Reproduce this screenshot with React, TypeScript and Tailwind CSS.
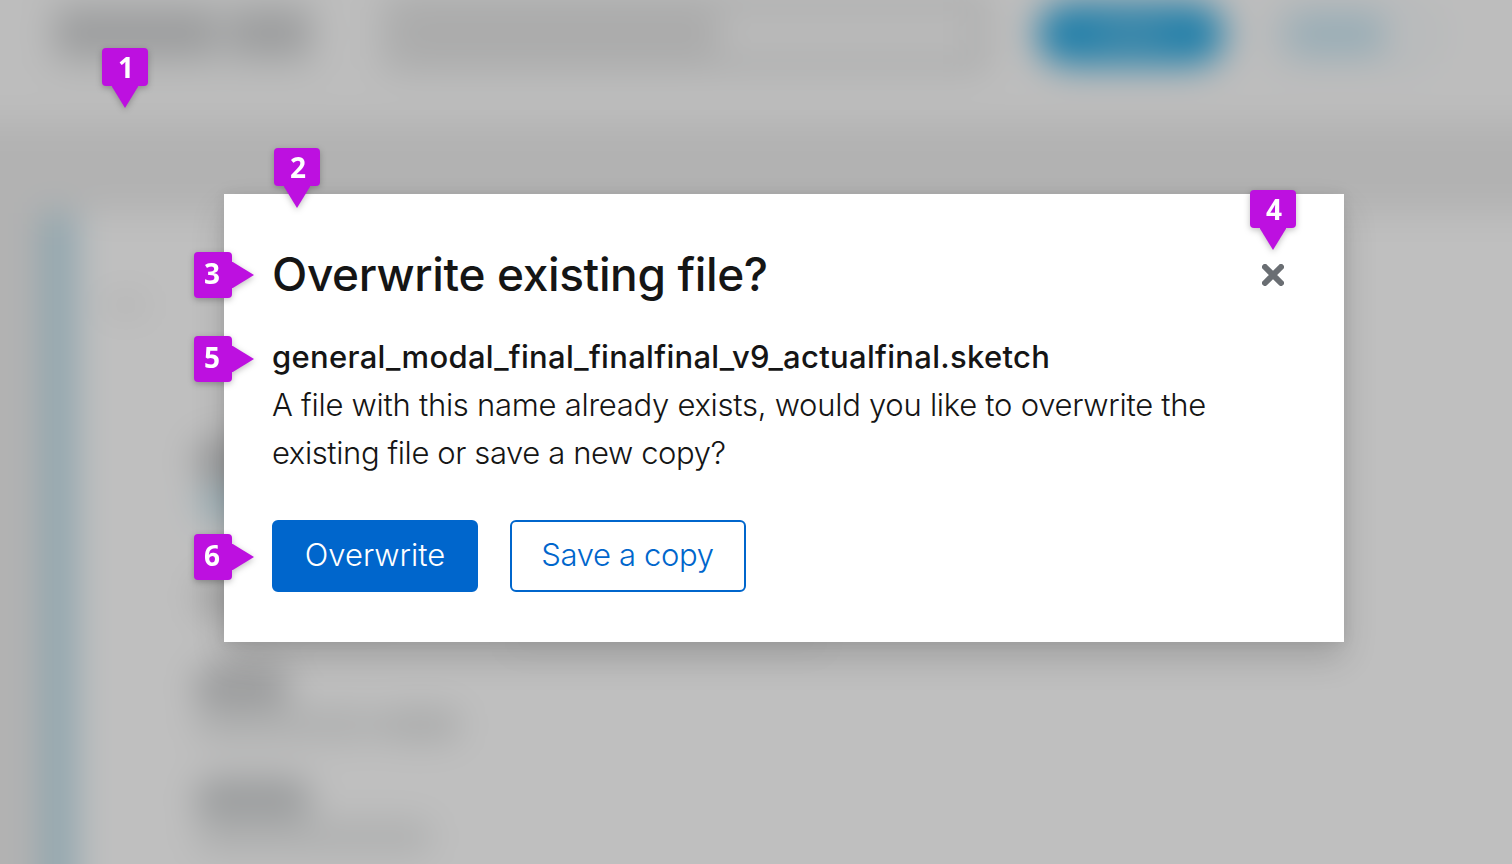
import type { ReactNode } from "react";

type Direction = "down" | "right";

function Marker({ n, direction, className }: { n: number; direction: Direction; className: string }) {
  const down = direction === "down";
  return (
    <div
      className={`absolute flex items-center font-['Open_Sans',sans-serif] text-[28px] leading-none font-bold text-white drop-shadow-[0_2px_3px_rgba(0,0,0,0.25)] ${
        down ? "flex-col" : "flex-row"
      } ${className}`}
    >
      <span
        className={`flex items-center justify-center rounded bg-[#bd10e0] ${
          down ? "h-[38px] w-[46px] pb-px pl-0.5" : "h-[46px] w-[38px] pr-0.5 pb-1"
        }`}
      >
        {n}
      </span>
      {down ? (
        <svg className="block h-[22px] w-[26px]" viewBox="0 0 26 22" aria-hidden="true">
          <path d="M-0.5 0H26.5L13 22Z" fill="#bd10e0" />
        </svg>
      ) : (
        <svg className="block h-[26px] w-[22px]" viewBox="0 0 22 26" aria-hidden="true">
          <path d="M0 -0.5V26.5L22 13Z" fill="#bd10e0" />
        </svg>
      )}
    </div>
  );
}

function Bar({ className }: { className: string }) {
  return <div className={`shrink-0 rounded-full ${className}`} />;
}

function Panel({ children }: { children: ReactNode }) {
  return <div className="flex grow flex-col items-start bg-[#bfbfbf] pl-[30px]">{children}</div>;
}

function Backdrop() {
  return (
    <div className="absolute -inset-[60px] flex flex-col bg-[#b2b2b2] blur-[17px]" aria-hidden="true">
      <header className="flex h-[183px] shrink-0 items-start bg-[#bdbdbd] pt-[54px] pl-[108px]">
        <div className="flex h-[78px] w-[268px] items-center gap-2 rounded-xl bg-[#b3b4b4] pl-1.5">
          <Bar className="h-[42px] w-[166px] bg-[#9c9d9e]" />
          <Bar className="h-[42px] w-[84px] bg-[#9c9d9e]" />
        </div>
        <div className="ml-[67px] flex h-[78px] w-[604px] items-center rounded-xl border-[14px] border-[#a9aaaa] bg-[#bababa]">
          <Bar className="h-11 w-[325px] bg-[#ababab]" />
        </div>
        <div className="mt-[8px] ml-[50px] flex h-[64px] w-[188px] items-center justify-center rounded-full bg-[#2681aa]">
          <Bar className="h-5 w-[70px] bg-[#4a8caa]" />
        </div>
        <div className="mt-[8px] ml-[42px] flex h-[64px] w-[170px] items-center rounded-full border-8 border-[#adb5b9] pl-[10px]">
          <Bar className="h-10 w-[104px] bg-[#98adb6]" />
        </div>
      </header>
      <main className="flex grow pt-[90px] pl-[102px]">
        <div className="w-[34px] shrink-0 bg-[#8ea5ae]" />
        <Panel>
          <Bar className="mt-[84px] h-4 w-10 bg-[#b0b0b0]" />
          <Bar className="mt-[124px] ml-[87px] h-12 w-[200px] bg-[#9b9c9d]" />
          <Bar className="mt-[2px] ml-[91px] h-8 w-[200px] bg-[#97aeb6]" />
          <Bar className="mt-[58px] ml-[91px] h-10 w-[200px] bg-[#a3a3a3]" />
          <Bar className="mt-[20px] ml-[400px] h-2 w-[320px] bg-[#adadad]" />
          <Bar className="mt-[20px] ml-[88px] h-[46px] w-[96px] bg-[#9b9c9d]" />
          <div className="-mt-1 ml-[88px] flex">
            <Bar className="h-9 w-[184px] bg-[#b0b1b1]" />
            <Bar className="h-9 w-[84px] bg-[#acadad]" />
          </div>
          <Bar className="mt-[34px] ml-[88px] h-[46px] w-[118px] bg-[#9c9e9f]" />
          <Bar className="-mt-1 ml-[88px] h-9 w-[240px] bg-[#b0b1b1]" />
        </Panel>
      </main>
    </div>
  );
}

export default function App() {
  return (
    <div className="relative h-[864px] w-[1512px] overflow-hidden bg-[#bebebe] pt-[194px] pl-[224px] font-['Inter',sans-serif] text-[#151515]">
      <Backdrop />
      <section
        role="dialog"
        aria-labelledby="modal-title"
        className="relative flex h-[448px] w-[1120px] flex-col bg-white px-12 pt-12 shadow-[0_16px_32px_rgba(3,3,3,0.16),0_0_12px_rgba(3,3,3,0.08)]"
      >
        <div className="flex h-16 items-center justify-between">
          <h1 id="modal-title" className="text-[46px] leading-[64px] font-medium tracking-[-0.36px] whitespace-nowrap">
            Overwrite existing file?
          </h1>
          <button type="button" aria-label="Close" className="mt-0.5 mr-3 flex size-[22px]">
            <svg className="block size-[22px]" viewBox="0 0 22 22" aria-hidden="true">
              <path d="M3 3L19 19M19 3L3 19" stroke="#6a6e73" strokeWidth="6" strokeLinecap="round" />
            </svg>
          </button>
        </div>
        <h2 className="mt-[33px] text-[31px] leading-9 font-medium tracking-[0.31px] whitespace-nowrap">
          general_modal_final_finalfinal_v9_actualfinal.sketch
        </h2>
        <p className="mt-[6px] text-[31px] leading-[48px] font-light tracking-[-0.27px] whitespace-nowrap">
          A file with this name already exists, would you like to overwrite the
          <br />
          <span className="tracking-[-0.4px]">existing file or save a new copy?</span>
        </p>
        <div className="mt-[43px] flex gap-8 text-[31px] leading-[66px] font-light whitespace-nowrap">
          <button
            type="button"
            className="h-[72px] w-[206px] rounded-md border-2 border-[#06c] bg-[#06c] pb-0.5 text-white"
          >
            Overwrite
          </button>
          <button
            type="button"
            className="h-[72px] w-[236px] rounded-md border-2 border-[#06c] bg-white pr-px pb-0.5 tracking-[-0.35px] text-[#06c]"
          >
            Save a copy
          </button>
        </div>
      </section>
      <Marker n={1} direction="down" className="top-12 left-[102px]" />
      <Marker n={2} direction="down" className="top-[148px] left-[274px]" />
      <Marker n={3} direction="right" className="top-[252px] left-[194px]" />
      <Marker n={4} direction="down" className="top-[190px] left-[1250px]" />
      <Marker n={5} direction="right" className="top-[336px] left-[194px]" />
      <Marker n={6} direction="right" className="top-[534px] left-[194px]" />
    </div>
  );
}
